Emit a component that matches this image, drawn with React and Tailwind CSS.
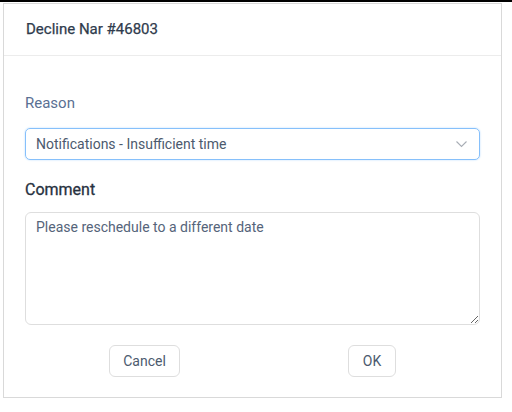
import React from 'react';

export default function App() {
  return (
    <div className="w-[512px] h-[412px] bg-white border-t-2 border-black pt-px pl-[3px] font-['Roboto',sans-serif]">
      <div className="w-[499px] h-[395px] border border-[#d9d9d9] flex flex-col">
        <div className="h-[52px] border-b border-[#ececec] flex items-center px-[22px]">
          <h2 className="text-[15px] font-normal text-[#2f3b4d] [-webkit-text-stroke:0.25px_#2f3b4d]">Decline Nar #46803</h2>
        </div>

        <div className="flex flex-col px-[21px] pt-[37px]">
          <label className="text-[15px] leading-5 text-[#5a7093]">Reason</label>
          <div className="mt-[15px] h-[32px] rounded-[5px] border border-[#86c0fb] shadow-[0_0_2px_#b3d9fd] flex items-center justify-between pl-[10px] pr-[12px]">
            <span className="text-[14px] text-[#4c5a6e]">Notifications - Insufficient time</span>
            <svg width="11" height="7" viewBox="0 0 11 7" fill="none">
              <path d="M0.5 0.5 L5.5 5.5 L10.5 0.5" stroke="#a8adb5" strokeWidth="1.1" />
            </svg>
          </div>

          <label className="mt-[19px] text-[16px] leading-[22px] font-normal text-[#27313f] [-webkit-text-stroke:0.3px_#27313f]">Comment</label>
          <textarea
            className="mt-[11px] h-[113px] rounded-[6px] border border-[#dedede] px-[10px] py-[4px] text-[14px] text-[#55647a] outline-none"
            defaultValue="Please reschedule to a different date"
          />

          <div className="mt-[20px] flex ml-[84px] gap-[168px]">
            <button className="h-[32px] w-[71px] rounded-[6px] border border-[#dedede] text-[14px] text-[#4c5a6e]">Cancel</button>
            <button className="h-[32px] w-[48px] rounded-[6px] border border-[#dedede] text-[14px] text-[#4c5a6e]">OK</button>
          </div>
        </div>
      </div>
    </div>
  );
}
